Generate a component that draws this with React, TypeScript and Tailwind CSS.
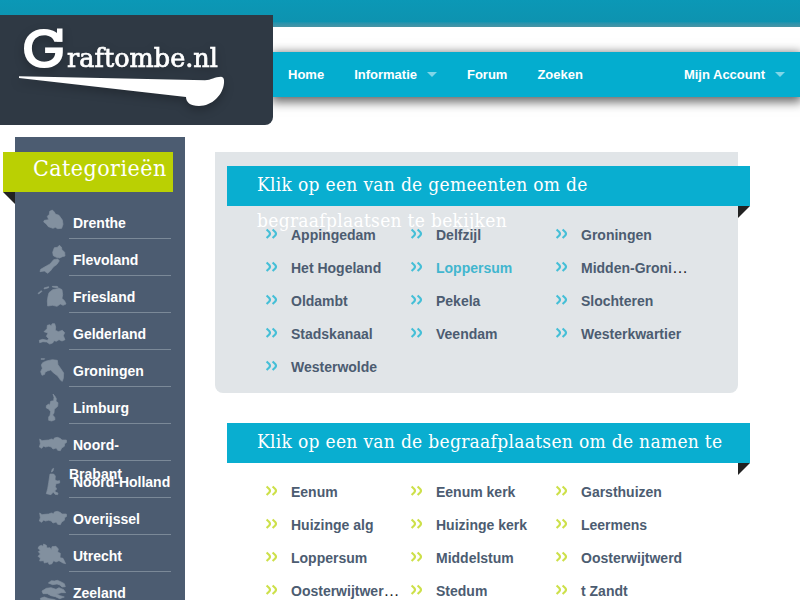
import React from "react";

interface Province {
  name: string;
  shape: string;
}

const brabant =
  "M8 45 L15 50 L24 49 L35 48 L43 45 L50 47 L52 42 L61 40 L69 43 L75 48 L88 48 L89 55 L83 59 L82 67 L74 72 L70 80 L62 79 L58 72 L48 75 L43 69 L35 67 L25 69 L20 66 L14 73 L7 69 L10 59 Z";

const provinces: Province[] = [
  {
    name: "Drenthe",
    shape: "M38 28 L46 24 L52 30 L55 36 L66 40 L76 54 L78 67 L74 79 L62 80 L55 76 L48 79 L34 74 L27 65 L20 60 L22 55 L35 53 L31 43 L37 37 Z",
  },
  {
    name: "Flevoland",
    shape:
      "M52 26 L61 25 L67 19 L73 24 L75 32 L83 40 L84 51 L76 53 L68 57 L58 55 L49 50 L47 40 Z M50 62 L62 60 L67 65 L60 76 L49 84 L40 96 L32 103 L22 96 L9 98 L11 91 L28 81 L39 75 Z",
  },
  {
    name: "Friesland",
    shape:
      "M36 50 L47 41 L67 37 L75 41 L77 56 L75 67 L83 75 L87 84 L78 88 L70 84 L60 91 L47 88 L32 90 L31 75 L33 61 Z M3 52 L13 44 L15 46 L5 54 Z M21 36 L35 32 L35 35 L22 39 Z M46 31 L60 31 L64 34 L60 35 L46 33 Z",
  },
  {
    name: "Gelderland",
    shape:
      "M21 56 L30 47 L31 37 L38 35 L42 38 L46 32 L53 32 L56 42 L55 52 L64 56 L76 52 L83 59 L79 68 L84 80 L75 84 L66 80 L58 85 L51 83 L47 90 L38 93 L29 87 L18 86 L8 89 L7 82 L17 79 L31 82 L35 77 L28 70 L33 60 Z",
  },
  {
    name: "Groningen",
    shape:
      "M17 38 L28 33 L46 29 L61 31 L63 44 L72 57 L80 69 L79 85 L76 94 L71 91 L62 78 L49 68 L41 60 L31 63 L24 67 L23 73 L15 76 L11 65 L16 55 L13 45 Z M12 26 L23 26 L22 28 L12 28 Z",
  },
  {
    name: "Limburg",
    shape:
      "M48 21 L54 28 L58 35 L57 43 L63 47 L62 58 L52 67 L51 78 L47 84 L53 91 L54 98 L44 102 L35 100 L35 90 L39 85 L41 74 L35 66 L28 63 L28 56 L35 51 L38 55 L41 43 L50 41 L51 31 Z",
  },
  { name: "Noord-Brabant", shape: brabant },
  {
    name: "Noord-Holland",
    shape:
      "M43 33 L46 24 L50 22 L48 30 Z M39 39 L50 39 L55 45 L54 56 L60 60 L68 59 L68 66 L57 68 L55 77 L59 84 L53 90 L57 94 L63 96 L62 101 L54 100 L49 93 L42 101 L28 98 L32 83 L35 65 Z",
  },
  { name: "Overijssel", shape: brabant },
  {
    name: "Utrecht",
    shape:
      "M6 34 L13 31 L18 34 L20 27 L28 31 L30 39 L39 38 L43 44 L45 35 L57 34 L64 42 L62 51 L70 55 L69 68 L78 70 L86 86 L78 84 L66 77 L57 81 L50 77 L44 87 L36 88 L33 81 L22 84 L20 77 L8 78 L10 69 L3 64 L10 57 L4 50 L10 46 L3 40 Z",
  },
  {
    name: "Zeeland",
    shape:
      "M34 33 L43 26 L52 27 L61 25 L71 29 L82 35 L85 44 L75 45 L69 39 L60 36 L47 38 Z M15 57 L28 49 L42 47 L57 52 L66 47 L80 53 L86 62 L73 62 L59 66 L70 71 L82 75 L68 80 L55 74 L42 71 L31 65 L18 65 Z M10 79 L22 75 L36 80 L50 82 L64 87 L80 92 L75 102 L55 98 L36 97 L14 94 Z",
  },
];

const municipalities = [
  "Appingedam",
  "Delfzijl",
  "Groningen",
  "Het Hogeland",
  "Loppersum",
  "Midden-Groni…",
  "Oldambt",
  "Pekela",
  "Slochteren",
  "Stadskanaal",
  "Veendam",
  "Westerkwartier",
  "Westerwolde",
];

const cemeteries = [
  "Eenum",
  "Eenum kerk",
  "Garsthuizen",
  "Huizinge alg",
  "Huizinge kerk",
  "Leermens",
  "Loppersum",
  "Middelstum",
  "Oosterwijtwerd",
  "Oosterwijtwer…",
  "Stedum",
  "t Zandt",
];

const Logo = () => (
  <div className="relative z-10 h-[110px] w-[273px] shrink-0 rounded-br-lg bg-[#2f3944]">
    <svg width="273" height="110" viewBox="0 15 273 110" fill="#fff" className="drop-shadow-[0_4px_5px_rgba(0,0,0,0.25)]">
      <text
        x="21"
        y="68.3"
        fontSize="54"
        fontWeight="600"
        textLength="45"
        lengthAdjust="spacingAndGlyphs"
        fontFamily="Inter, sans-serif"
      >
        G
      </text>
      <rect x="57" y="28.5" width="5.5" height="13" />
      <text
        x="67"
        y="67"
        fontSize="25.5"
        textLength="151"
        lengthAdjust="spacingAndGlyphs"
        stroke="#fff"
        strokeWidth="0.7"
        fontFamily="'DejaVu Serif', serif"
      >
        raftombe.nl
      </text>
      <path d="M19 76.3 L205 80.3 C211 80 215 76.7 221 76.7 C224 77 224.3 80 224 83 C223 95 212 106 199 106 C190 106 186 102 186 97 L19 78 Z" />
    </svg>
  </div>
);

const Caret = () => (
  <span className="ml-2.5 h-0 w-0 border-x-5 border-t-5 border-x-transparent border-t-[#80d6e8]" />
);

const Header = () => (
  <header className="relative flex h-[137px] items-start bg-white">
    <div className="absolute inset-x-0 top-0 h-[27px] bg-linear-to-b from-[#0b98b6] via-[#0d93b0] via-80% to-[#4794a5]" />
    <div className="pt-[15px]">
      <Logo />
    </div>
    <nav className="mt-[52px] flex h-[45px] flex-1 items-center bg-[#04adcf] pl-[15px] text-[13px] font-bold text-white shadow-[0_3px_10px_2px_rgba(0,0,0,0.6)]">
      <a>Home</a>
      <a className="ml-[30px] flex items-center">
        Informatie
        <Caret />
      </a>
      <a className="ml-[30px]">Forum</a>
      <a className="ml-[30px]">Zoeken</a>
      <a className="mr-[15px] ml-auto flex items-center">
        Mijn Account
        <Caret />
      </a>
    </nav>
  </header>
);

const Sidebar = () => (
  <aside className="h-[463px] w-[170px] shrink-0 bg-[#4c5c71] pt-[15px]">
    <div className="relative -ml-3 h-10 w-[170px] bg-[#bad003] pl-[30px]">
      <h2 className="font-['DejaVu_Serif_Condensed','DejaVu_Serif',serif] text-[23px] leading-[33px] tracking-[0.45px] whitespace-nowrap text-white">
        Categorieën
      </h2>
      <span className="absolute top-full left-0 border-t-12 border-l-12 border-t-[#222] border-l-transparent" />
    </div>
    <ul className="mt-[10px] ml-[22px]">
      {provinces.map((province) => (
        <li key={province.name} className="flex h-[37px]">
          <svg width="30" height="37" viewBox="0 0 90 111" fill="#82909f" stroke="#82909f" strokeWidth="2" strokeLinejoin="round" className="shrink-0">
            <path d={province.shape} />
          </svg>
          <a className="ml-0.5 w-[102px] border-b border-[#7b8998] pt-[7px] indent-1 text-sm leading-[29px] font-bold text-white">
            {province.name}
          </a>
        </li>
      ))}
    </ul>
  </aside>
);

const Ribbon = ({ title }: { title: string }) => (
  <div className="relative ml-3 h-10 w-[523px] bg-[#09aed0] pr-5 pl-[30px]">
    <h2 className="font-['DejaVu_Serif_Condensed','DejaVu_Serif',serif] text-[19px] leading-9 tracking-[0.3px] text-white">{title}</h2>
    <span className="absolute top-full right-0 border-t-12 border-r-12 border-t-[#222] border-r-transparent" />
  </div>
);

interface LinkListProps {
  items: string[];
  arrow: string;
  active?: string;
}

const LinkList = ({ items, arrow, active }: LinkListProps) => (
  <ul className="relative ml-[50px] grid w-[435px] grid-cols-3 text-sm font-bold text-[#4c5c71]">
    {items.map((item) => (
      <li key={item} className="flex h-[33px] items-center whitespace-nowrap">
        <svg width="14" height="12" viewBox="0 0 14 12" fill="none" stroke={arrow} strokeWidth="2.1" className="mr-3 -mt-0.5 shrink-0">
          <path d="M1.6 1.6 L4.2 4 Q5.8 5.8 4.2 7.6 L1.6 10 M7.6 1.6 L10.2 4 Q11.8 5.8 10.2 7.6 L7.6 10" />
        </svg>
        <a className={item === active ? "text-[#41b6cf]" : ""}>{item.replace("…", "")}</a>
        {item.endsWith("…") && <span className="text-base font-normal text-[#222]">…</span>}
      </li>
    ))}
  </ul>
);

const App = () => {
  return (
    <div className="h-[600px] w-[800px] overflow-hidden bg-white font-['Liberation_Sans',Arial,sans-serif]">
      <Header />
      <div className="flex items-start pl-[15px]">
        <Sidebar />
        <main className="mt-[15px] ml-[30px] w-[523px]">
          <section className="h-[241px] rounded-b-lg bg-[#e1e5e8] pt-[14px]">
            <Ribbon title="Klik op een van de gemeenten om de begraafplaatsen te bekijken" />
            <div className="pt-3">
              <LinkList items={municipalities} arrow="#45bfd7" active="Loppersum" />
            </div>
          </section>
          <section className="mt-[30px]">
            <Ribbon title="Klik op een van de begraafplaatsen om de namen te bekijken" />
            <div className="pt-3">
              <LinkList items={cemeteries} arrow="#cde04a" />
            </div>
          </section>
        </main>
      </div>
    </div>
  );
};

export default App;
